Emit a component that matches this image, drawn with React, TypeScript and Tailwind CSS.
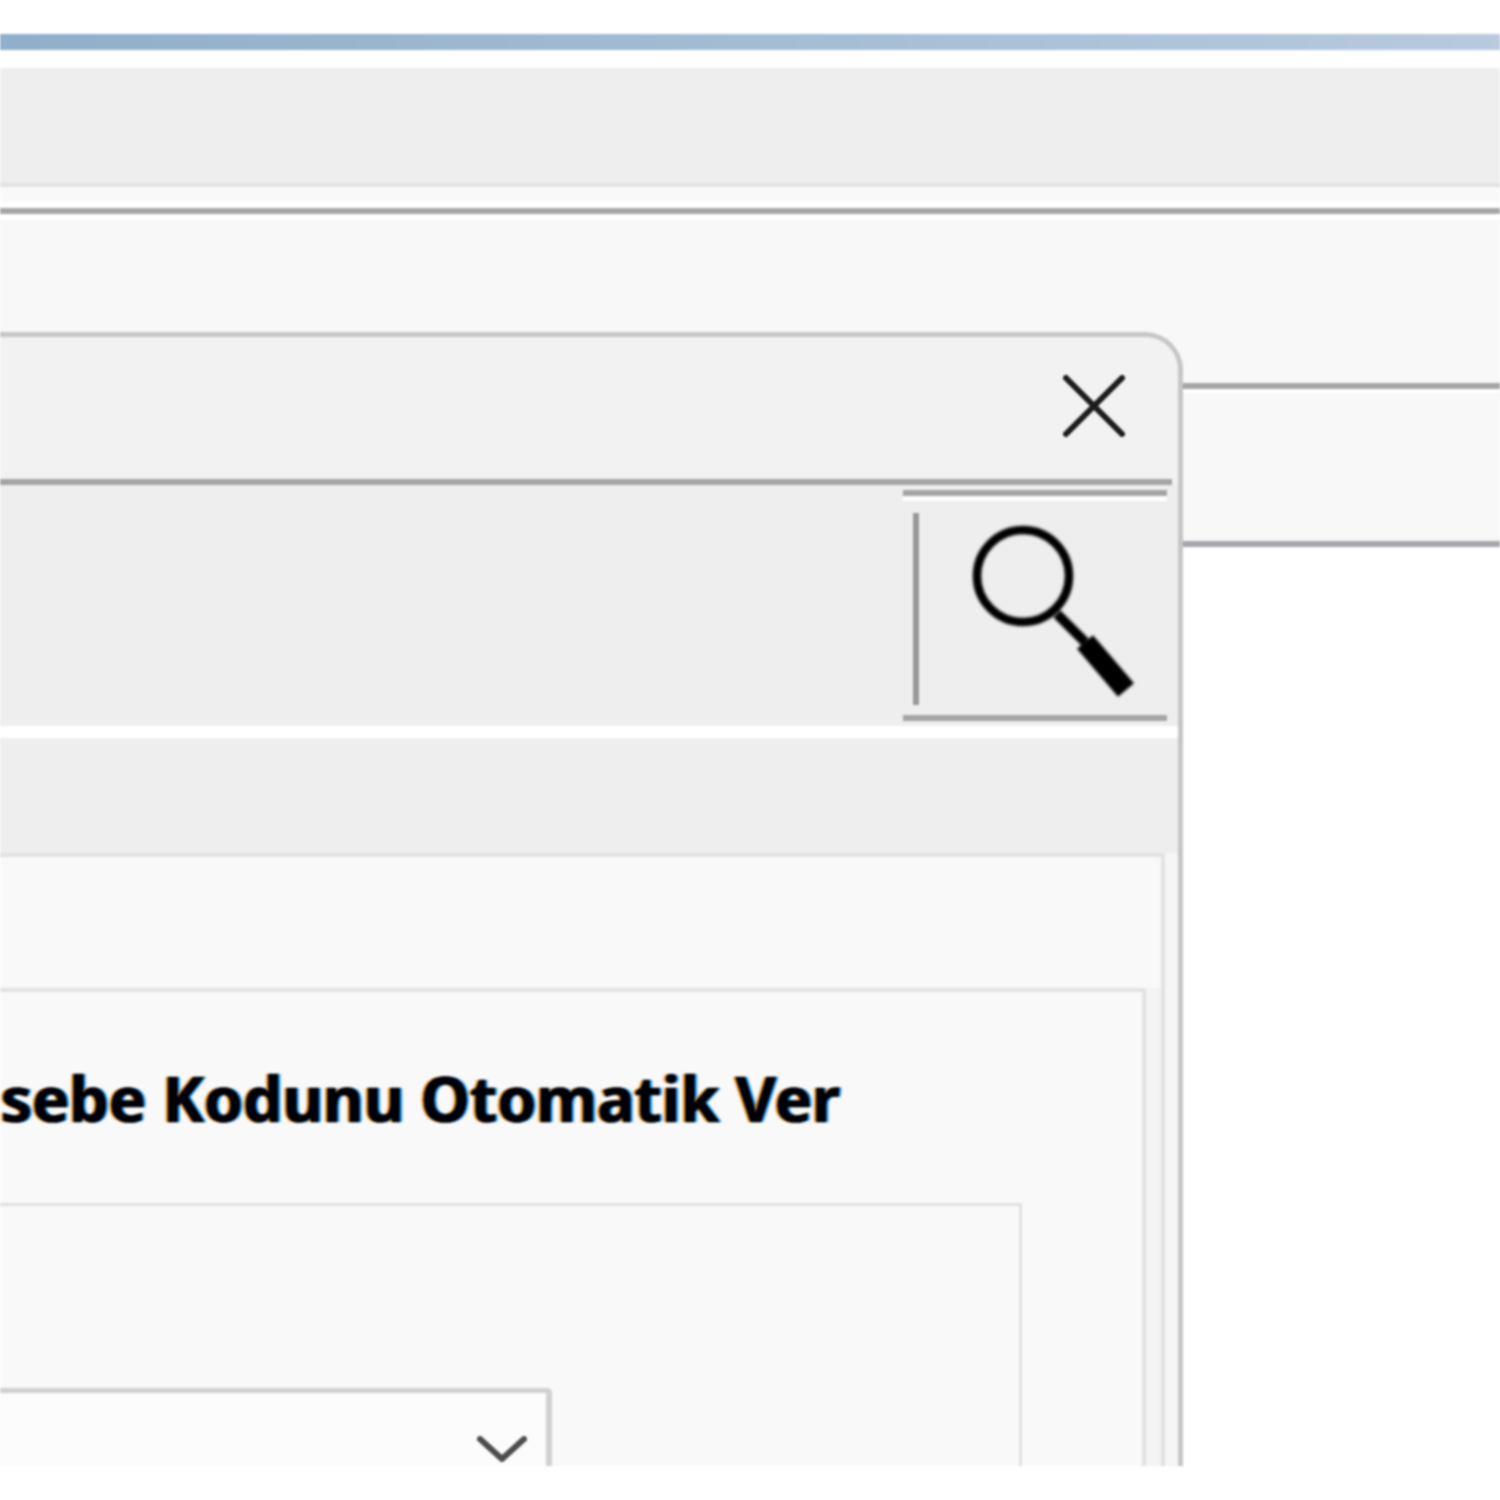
export default function App() {
  return (
    <div className="w-[1500px] h-[1500px] bg-white overflow-hidden">
      <div className="flex flex-col blur-[1px]">
        <div className="h-[34px] bg-white" />
        <div className="h-[16px] bg-gradient-to-r from-[#8fafcc] to-[#b8cadd]" />
        <div className="h-[18px] bg-white" />
        <div className="h-[115px] bg-[#eeeeee]" />
        <div className="h-[4px] bg-[#e2e2e2]" />
        <div className="h-[14px] bg-[#f9f9f9]" />
        <div className="h-[7px] bg-white" />
        <div className="h-[6px] bg-[#a6a6a6]" />
        <div className="h-[6px] bg-white" />

        <div className="h-[1246px] flex overflow-hidden">
          <div className="w-[1183px] flex flex-col shrink-0 bg-[#f8f8f8]">
            <div className="h-[112px] shrink-0" />
            <div className="flex-1 min-h-0 flex flex-col bg-[#f6f6f6] border-t-[5px] border-r-[5px] border-[#c6c6c6] rounded-tr-[38px] overflow-hidden">
              <div className="h-[142px] shrink-0 bg-[#f2f2f2] flex items-center justify-end pr-[53px]">
                <svg width="62" height="62" viewBox="0 0 62 62" fill="none" className="-mt-[4px]">
                  <path d="M3 3 L59 59 M59 3 L3 59" stroke="#1c1c1c" strokeWidth="6" strokeLinecap="round" />
                </svg>
              </div>
              <div className="h-[6px] shrink-0 bg-[#f2f2f2]">
                <div className="h-full mr-[6px] bg-[#a4a4a4]" />
              </div>

              <div className="h-[241px] shrink-0 flex bg-[#eeeeee]">
                <div className="flex-1" />
                <div className="w-[264px] flex flex-col mr-[11px] h-[236px]">
                  <div className="h-[5px] bg-[#eeeeee]" />
                  <div className="h-[6px] bg-[#a4a4a4]" />
                  <div className="h-[5px] bg-white" />
                  <div className="flex-1 flex items-start pl-[10px]">
                    <div className="w-[6px] h-[192px] mt-[12px] bg-[#989898]" />
                    <svg width="176" height="181" viewBox="-3 -3 176 181" fill="none" className="ml-[48px] mt-[22px] blur-[1.2px]">
                      <circle cx="53" cy="50" r="46" stroke="#000000" strokeWidth="8.5" />
                      <path d="M87 88 L115 116" stroke="#000000" strokeWidth="10" />
                      <path d="M115 116 L156 164" stroke="#000000" strokeWidth="21" />
                    </svg>
                  </div>
                  <div className="h-[6px] bg-[#a4a4a4]" />
                </div>
              </div>

              <div className="h-[12px] shrink-0 bg-white" />
              <div className="h-[115px] shrink-0 bg-[#eeeeee]" />

              <div className="flex-1 min-h-0 flex flex-col mr-[13px] border-t-[4px] border-r-[4px] border-[#e2e2e2] bg-[#f9f9f9]">
                <div className="h-[131px] shrink-0" />
                <div className="flex-1 min-h-0 flex flex-col bg-[#f4f4f4] pr-[15px]">
                  <div className="flex-1 min-h-0 flex flex-col bg-[#f9f9f9] border-t-[4px] border-r-[4px] border-[#e2e2e2]">
                    <div className="h-[211px] shrink-0 flex items-center justify-end overflow-hidden pr-[302px] whitespace-nowrap text-[62.5px] font-bold text-[#000008] [font-family:'Noto_Sans',sans-serif] [-webkit-text-stroke:0.6px_#000008] [text-shadow:-2.5px_0_1px_#e8901c,2.5px_0_1px_#1c9cff,0_0_7px_#ffffff]">
                      Muhasebe Kodunu Otomatik Ver
                    </div>
                    <div className="flex-1 min-h-0 flex flex-col mr-[120px] border-t-[3px] border-r-[3px] border-[#e0e0e0]">
                      <div className="h-[182px] shrink-0" />
                      <div className="flex-1 flex justify-end w-[552px] bg-[#fcfcfc] border-t-[5px] border-r-[6px] border-[#d0d0d0] rounded-tr-[5px] pr-[19px] pt-[43px]">
                        <svg width="50" height="26" viewBox="0 0 50 26" fill="none">
                          <path d="M3 3 L25 23 L47 3" stroke="#4c4c4c" strokeWidth="6" strokeLinecap="round" strokeLinejoin="round" />
                        </svg>
                      </div>
                    </div>
                  </div>
                </div>
              </div>
            </div>
          </div>

          <div className="flex-1 flex flex-col">
            <div className="h-[163px] bg-[#f8f8f8]" />
            <div className="h-[6px] bg-[#a6a6a6]" />
            <div className="h-[4px] bg-white" />
            <div className="h-[148px] bg-[#f8f8f8]" />
            <div className="h-[6px] bg-[#a6a6ac]" />
            <div className="flex-1 bg-white" />
          </div>
        </div>
      </div>
    </div>
  );
}
